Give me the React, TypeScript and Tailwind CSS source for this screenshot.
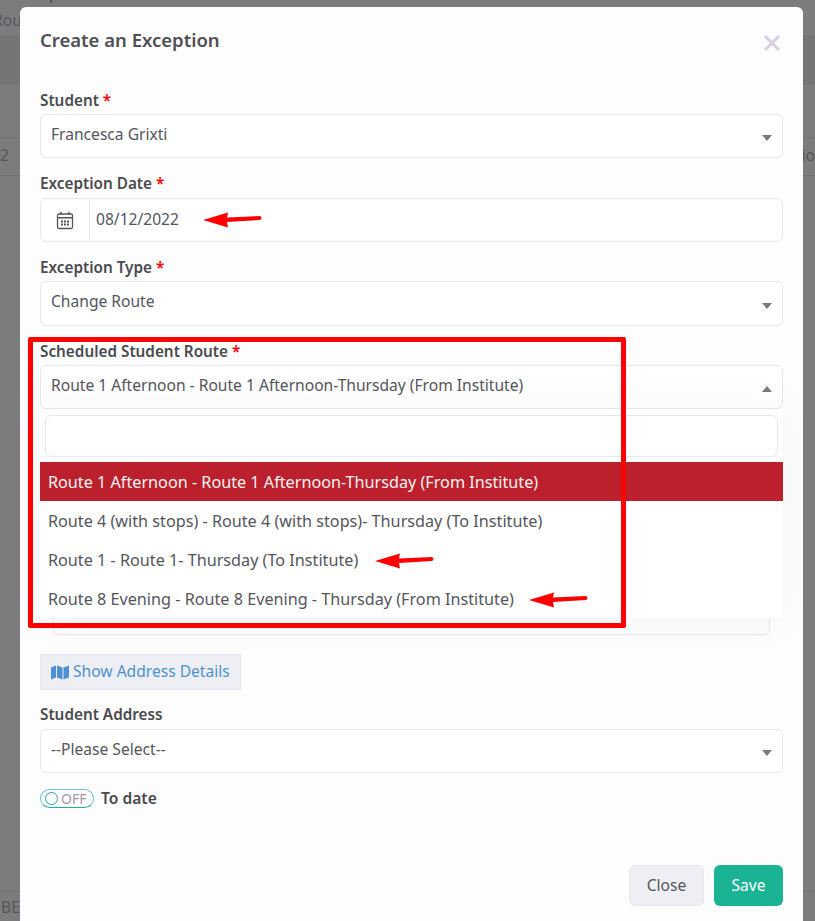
import * as React from 'react';

const Caret = ({ up = false }: { up?: boolean }) => (
  <span
    className={`ml-auto mt-[7px] mr-[10px] h-0 w-0 border-x-[5px] border-x-transparent ${
      up ? 'border-b-[6px] border-b-[#7b7b83]' : 'border-t-[6px] border-t-[#7b7b83]'
    }`}
  />
);

const FieldLabel = ({ text, required = true }: { text: string; required?: boolean }) => (
  <label className="block h-[19px] text-[15.3px] font-semibold leading-[19px] text-[#4a4a4f]">
    {text}
    {required && <span className="text-[#f00]"> *</span>}
  </label>
);

const SelectBox = ({ value, up = false, tall = false }: { value: string; up?: boolean; tall?: boolean }) => (
  <div
    className={`flex items-center rounded-md border border-[#e6e7ef] bg-white pb-[3px] pl-[10px] text-[#55555c] ${
      tall ? 'h-[45px]' : 'h-[44px]'
    }`}
  >
    <span>{value}</span>
    <Caret up={up} />
  </div>
);

const options = [
  'Route 1 Afternoon - Route 1 Afternoon-Thursday (From Institute)',
  'Route 4 (with stops) - Route 4 (with stops)- Thursday (To Institute)',
  'Route 1 - Route 1- Thursday (To Institute)',
  'Route 8 Evening - Route 8 Evening - Thursday (From Institute)',
];

// red hand-drawn arrows from the annotated screenshot
const Arrow = ({ className }: { className: string }) => (
  <svg className={`absolute ${className}`} width="60" height="16" viewBox="0 0 60 16">
    <path d="M0 8 L25 0.5 L24 5.5 L57 4 Q60 6 57 8 L24 10 L25 15.5 Z" fill="#f00" />
  </svg>
);

const CalendarIcon = () => (
  <svg width="18" height="19" viewBox="0 0 18 19" fill="none" stroke="#55555c">
    <rect x="1.5" y="3" width="15" height="14.5" rx="1.5" strokeWidth="1.3" />
    <path d="M2 6.8 H16 M5 0.8 V4 M13 0.8 V4" strokeWidth="1.4" />
    <path
      d="M5 9.5h2v2H5z M8 9.5h2v2H8z M11 9.5h2v2h-2z M5 12.5h2v2H5z M8 12.5h2v2H8z M11 12.5h2v2h-2z"
      fill="#55555c"
      stroke="none"
    />
  </svg>
);

export default function App() {
  return (
    <div className="relative h-[921px] w-[815px] overflow-hidden bg-[#7c7c7e] font-['Noto_Sans',sans-serif] text-[15.6px] text-[#55555c]">
      {/* page behind the modal */}
      <div className="text-[#56565a]">
        <div className="ml-[50px] h-[3px] w-[2px] bg-[#56565a]" />
        <div className="ml-[-7px] h-[32px] pt-[6px] leading-[22px]">Route</div>
        <div className="h-[50px] bg-[#757577]" />
        <div className="h-[53px] border-b border-[#717173]" />
        <div className="flex h-[38px] items-center justify-between border-b border-[#717173] pb-[2px]">
          <span>2</span>
          <span>io</span>
        </div>
      </div>
      <div className="absolute inset-x-0 bottom-0 h-[30px] border-t border-[#717173] pl-[1px] pt-[4px] text-[#56565a]">
        BE
      </div>

      {/* modal */}
      <div className="absolute left-[20px] top-[7px] h-[930px] w-[783px] rounded-md bg-[#fdfdfe] px-[20px]">
        <div className="flex h-[86px] items-start justify-between">
          <h2 className="mt-[20px] text-[18.5px] font-semibold leading-[25px] text-[#4f4f55]">Create an Exception</h2>
          <svg className="mr-[2px] mt-[27px]" width="18" height="18" viewBox="0 0 18 18">
            <path d="M2 2 L16 16 M16 2 L2 16" stroke="#d9d0e3" strokeWidth="3" />
          </svg>
        </div>

        <div className="mt-[-2px]">
          <FieldLabel text="Student" />
          <div className="mt-[4px]">
            <SelectBox value="Francesca Grixti" />
          </div>
        </div>

        <div className="mt-[16px]">
          <FieldLabel text="Exception Date" />
          <div className="mt-[5px] flex h-[44px] items-center rounded-md border border-[#e6e7ef] bg-white">
            <div className="flex h-full w-[49px] items-center justify-center border-r border-[#e6e7ef]">
              <CalendarIcon />
            </div>
            <span className="pl-[6px]">08/12/2022</span>
          </div>
        </div>

        <div className="mt-[16px]">
          <FieldLabel text="Exception Type" />
          <div className="mt-[4px]">
            <SelectBox value="Change Route" tall />
          </div>
        </div>

        <div className="relative mt-[16px]">
          <FieldLabel text="Scheduled Student Route" />
          <div className="mt-[4px]">
            <SelectBox value="Route 1 Afternoon - Route 1 Afternoon-Thursday (From Institute)" up />
          </div>

          {/* hidden field showing beneath the open dropdown */}
          <div className="mx-[13px] mt-[185px] h-[41px] rounded-md border border-[#e6e7ef]" />

          {/* open dropdown */}
          <div className="absolute left-0 right-0 top-[67px] h-[209px] overflow-hidden rounded-b-md bg-white text-[16.2px] shadow-[0_0_40px_rgba(80,80,100,0.06)]">
            <div className="h-[53px] px-[5px] pt-[6px]">
              <div className="h-[42px] rounded-md border border-[#e6e7ef] bg-white" />
            </div>
            {options.map((option, i) => (
              <div
                key={option}
                className={`flex h-[39px] items-center pl-[8px] pt-[1px] ${
                  i === 0 ? 'bg-[#bb202c] text-[#fdf3f3]' : 'text-[#55555c]'
                }`}
              >
                {option}
              </div>
            ))}
          </div>
        </div>

        <button className="mt-[19px] flex h-[36px] w-[201px] items-center border border-[#e6e8ee] bg-[#edeff4] pl-[10px] text-[#4d91d1]">
          <svg className="mr-[4px]" width="18" height="15" viewBox="0 0 18 15" fill="#4d91d1">
            <path d="M0 2.5 L5 0.5 V12.5 L0 14.5 Z M6 0.5 L11.5 2.5 V14.5 L6 12.5 Z M12.5 2.5 L18 0.5 V12.5 L12.5 14.5 Z" />
          </svg>
          Show Address Details
        </button>

        <div className="mt-[15px]">
          <FieldLabel text="Student Address" required={false} />
          <div className="mt-[5px]">
            <SelectBox value="--Please Select--" />
          </div>
        </div>

        <div className="mt-[14px] flex items-center">
          <div className="flex h-[19px] w-[54px] items-center rounded-full border border-[#6cc0e0] border-b-[#1ab394] pl-[4px]">
            <span className="h-[13px] w-[13px] rounded-full border border-[#2a9db0]" />
            <span className="ml-[3px] text-[14px] leading-none text-[#a59aa6]">OFF</span>
          </div>
          <span className="ml-[7px] text-[15.6px] font-semibold text-[#4a4a4f]">To date</span>
        </div>

        <div className="mt-[55px] flex justify-end gap-[10px]">
          <button className="h-[41px] w-[75px] rounded-md border border-[#e6e8ee] bg-[#edeff4] text-[#55555c]">Close</button>
          <button className="h-[41px] w-[69px] rounded-md bg-[#1ab394] text-white">Save</button>
        </div>
      </div>

      {/* red annotations drawn over the screenshot */}
      <div className="absolute left-[28px] top-[337px] h-[291px] w-[598px] rounded-[2px] border-[5px] border-[#f00]" />
      <Arrow className="left-[203px] top-[212px]" />
      <Arrow className="left-[375px] top-[553px]" />
      <Arrow className="left-[529px] top-[592px]" />
    </div>
  );
}
